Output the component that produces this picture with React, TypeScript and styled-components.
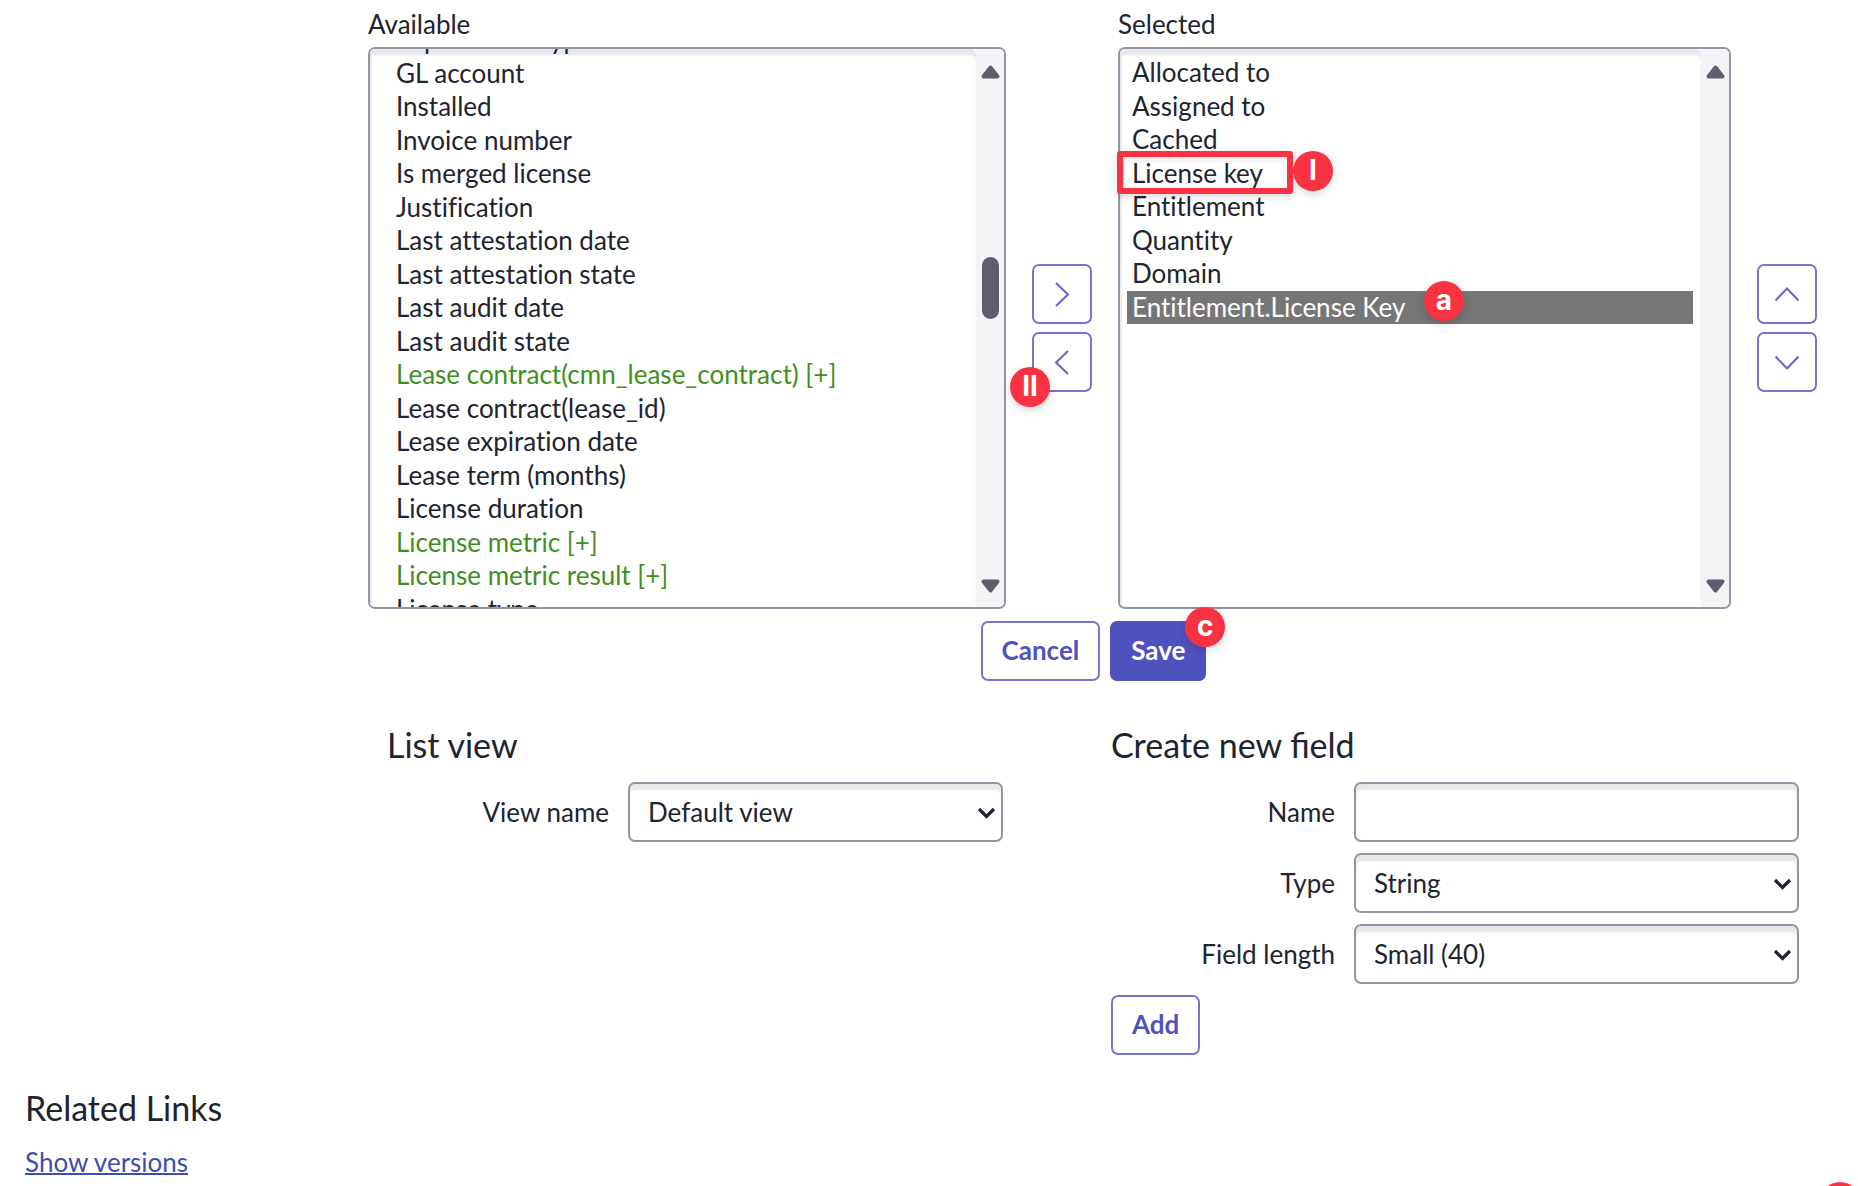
import React, { useLayoutEffect, useRef } from "react";
import styled, { createGlobalStyle } from "styled-components";

const ink = "#20242f";
const indigo = "#4f52bd";
const edge = "#9196a5";
const red = "#fa3344";

const GlobalStyle = createGlobalStyle`
  *, *::before, *::after { box-sizing: border-box; }
  body {
    margin: 0;
    background: #fff;
    color: ${ink};
    font-family: Lato, "Open Sans", sans-serif;
    font-size: 26px;
    line-height: 32px;
  }
`;

const Page = styled.main`
  position: relative;
  min-height: 100vh;
  overflow: hidden;
  padding-top: 8px;
`;

const Columns = styled.div`
  display: grid;
  grid-template-columns: 368fr 638fr 112px 613fr 127px;
`;

const Bucket = styled.div<{ $column: number }>`
  grid-column: ${(p) => p.$column};
  display: flex;
  flex-direction: column;
  gap: 7px;
  min-width: 0;
`;

const Frame = styled.div`
  position: relative;
  display: flex;
  height: 562px;
  border: 2px solid ${edge};
  border-radius: 7px;
`;

const ListBox = styled.select<{ $indent: number }>`
  flex: 1;
  min-width: 0;
  height: 100%;
  margin: 0;
  padding: 7px 8px 0 7px;
  border: 0;
  border-radius: 5px;
  outline: 0;
  background: #fff;
  color: ${ink};
  font: inherit;
  font-variant-ligatures: none;
  box-shadow: inset 0 6px 2px #e6e7e7, inset 2px 0 2px #ececee;
  scrollbar-width: none;

  &::-webkit-scrollbar { display: none; }

  option {
    box-sizing: content-box;
    min-height: 1.25em;
    padding: 0 4px 1px ${(p) => p.$indent}px;
  }
  option:checked {
    background: #767676 linear-gradient(#767676, #767676);
    color: #fff;
  }
`;

const Choice = styled.option<{ $related?: boolean }>`
  color: ${(p) => (p.$related ? "#3f8f22" : ink)};
`;

const Track = styled.div`
  display: flex;
  flex-direction: column;
  align-items: center;
  width: 28px;
  padding: 15px 0 13px;
  border-radius: 0 5px 5px 0;
  background: #f4f4f7;
  color: #5f5d6e;
`;

const Rail = styled.div`
  flex: 1;
  padding-top: 178px;
`;

const Thumb = styled.div`
  width: 17px;
  height: 62px;
  border-radius: 9px;
  background: currentColor;
`;

const Movers = styled.div<{ $column: number }>`
  grid-column: ${(p) => p.$column};
  display: flex;
  flex-direction: column;
  align-items: flex-start;
  gap: 8px;
  padding: 256px 0 0 26px;
`;

const Anchor = styled.div`
  position: relative;
  display: flex;
`;

const Button = styled.button<{ $primary?: boolean }>`
  display: flex;
  align-items: center;
  justify-content: center;
  height: 60px;
  padding: 0 19px 2px;
  border: 2px solid ${(p) => (p.$primary ? indigo : "#7477cd")};
  border-radius: 7px;
  background: ${(p) => (p.$primary ? indigo : "#fff")};
  color: ${(p) => (p.$primary ? "#fff" : indigo)};
  font: inherit;
  font-weight: 700;
`;

const IconButton = styled(Button)`
  width: 60px;
  padding: 0;
`;

const Actions = styled.div`
  display: flex;
  justify-content: center;
  gap: 10px;
  margin: 12px 39px 0 0;
  padding-left: 368px;
`;

const Forms = styled.div`
  display: grid;
  grid-template-columns: 387fr 616fr 108px 688fr 59px;
  margin-top: 43px;
`;

const Section = styled.form<{ $column: number }>`
  grid-column: ${(p) => p.$column};
  display: flex;
  flex-direction: column;
  align-items: flex-start;
  gap: 11px;
`;

const Heading = styled.h2`
  margin: 0;
  font-size: 34px;
  font-weight: 400;
  line-height: 42px;
`;

const SectionHeading = styled(Heading)`
  margin-bottom: 5px;
`;

const Field = styled.div<{ $label: number }>`
  display: grid;
  grid-template-columns: ${(p) => p.$label}px minmax(0, 1fr);
  column-gap: 19px;
  align-items: center;
  width: 100%;
`;

const FieldLabel = styled.label`
  text-align: right;
`;

const Control = styled.div`
  position: relative;
`;

const TextBox = styled.input`
  display: block;
  width: 100%;
  height: 60px;
  padding: 0 18px;
  border: 2px solid ${edge};
  border-radius: 7px;
  background: #fff;
  box-shadow: inset 0 6px 2px #e6e7e7;
  color: ${ink};
  font: inherit;
`;

const DropDown = styled(TextBox).attrs({ as: "select" })`
  appearance: none;
`;

const Caret = styled.svg`
  position: absolute;
  top: 24px;
  right: 7px;
  pointer-events: none;
`;

const Related = styled.section`
  display: flex;
  flex-direction: column;
  align-items: flex-start;
  gap: 17px;
  margin-top: 32px;
  padding: 0 25px;
`;

const Link = styled.a`
  color: #3c4fae;
  text-decoration: underline;
  text-decoration-thickness: 2px;
`;

const Marker = styled.span<{ $x: number; $y: number }>`
  position: absolute;
  left: ${(p) => p.$x}px;
  top: ${(p) => p.$y}px;
  display: flex;
  align-items: center;
  justify-content: center;
  width: 40px;
  height: 40px;
  padding-bottom: 2px;
  border-radius: 50%;
  background: ${red};
  box-shadow: 0 3px 8px rgba(0, 0, 0, 0.16);
  color: #fff;
  font: 700 28px/38px Inter, "Liberation Sans", sans-serif;
  pointer-events: none;
`;

const CornerMarker = styled(Marker)`
  top: auto;
  left: auto;
  right: -2px;
  bottom: -36px;
`;

const Highlight = styled.span`
  position: absolute;
  left: -3px;
  top: 102px;
  width: 176px;
  height: 43px;
  border: 6px solid ${red};
  border-radius: 3px;
  box-shadow: 0 3px 6px rgba(0, 0, 0, 0.14), inset 0 3px 6px rgba(0, 0, 0, 0.1);
  pointer-events: none;
`;

const available = [
  "Expenditure type",
  "GL account",
  "Installed",
  "Invoice number",
  "Is merged license",
  "Justification",
  "Last attestation date",
  "Last attestation state",
  "Last audit date",
  "Last audit state",
  "Lease contract(cmn_lease_contract) [+]",
  "Lease contract(lease_id)",
  "Lease expiration date",
  "Lease term (months)",
  "License duration",
  "License metric [+]",
  "License metric result [+]",
  "License type",
];

const selected = [
  "Allocated to",
  "Assigned to",
  "Cached",
  "License key",
  "Entitlement",
  "Quantity",
  "Domain",
  "Entitlement.License Key",
];

const chevrons = {
  right: "M9 1 L21 12.5 L9 24",
  left: "M21 1 L9 12.5 L21 24",
  up: "M3.500 18.500 L15 6.500 L26.500 18.500",
  down: "M3.500 6.500 L15 18.500 L26.500 6.500",
};

function Chevron({ to }: { to: keyof typeof chevrons }) {
  return (
    <svg width="30" height="25" viewBox="0 0 30 25" fill="none" aria-hidden="true">
      <path d={chevrons[to]} stroke="#6265cb" strokeWidth="2" />
    </svg>
  );
}

function ScrollTrack({ thumb }: { thumb?: boolean }) {
  return (
    <Track aria-hidden="true">
      <svg width="19" height="15" viewBox="0 0 19 15">
        <path d="M9.500 3.500 L16.500 12.500 H2.500 Z" fill="currentColor" stroke="currentColor" strokeWidth="4" strokeLinejoin="round" />
      </svg>
      <Rail>{thumb && <Thumb />}</Rail>
      <svg width="19" height="15" viewBox="0 0 19 15">
        <path d="M2.500 2.500 H16.500 L9.500 11.500 Z" fill="currentColor" stroke="currentColor" strokeWidth="4" strokeLinejoin="round" />
      </svg>
    </Track>
  );
}

function DropDownField({ id, label, value, labelWidth }: { id: string; label: string; value: string; labelWidth: number }) {
  return (
    <Field $label={labelWidth}>
      <FieldLabel htmlFor={id}>{label}</FieldLabel>
      <Control>
        <DropDown id={id}>
          <option>{value}</option>
        </DropDown>
        <Caret width="19" height="14" viewBox="0 0 19 14" fill="none" aria-hidden="true">
          <path d="M2 3 L9.500 10.500 L17 3" stroke={ink} strokeWidth="3.200" />
        </Caret>
      </Control>
    </Field>
  );
}

export default function App() {
  const availableRef = useRef<HTMLSelectElement>(null);

  useLayoutEffect(() => {
    if (availableRef.current) availableRef.current.scrollTop = 33;
  }, []);

  return (
    <Page>
      <GlobalStyle />
      <Columns>
        <Bucket $column={2}>
          <label htmlFor="available">Available</label>
          <Frame>
            <ListBox id="available" ref={availableRef} multiple $indent={19}>
              {available.map((name) => (
                <Choice key={name} $related={name.endsWith("[+]")}>{name}</Choice>
              ))}
            </ListBox>
            <ScrollTrack thumb />
          </Frame>
        </Bucket>
        <Movers $column={3}>
          <IconButton type="button" aria-label="Add to selected"><Chevron to="right" /></IconButton>
          <Anchor>
            <IconButton type="button" aria-label="Remove from selected"><Chevron to="left" /></IconButton>
            <Marker $x={-22} $y={35}>II</Marker>
          </Anchor>
        </Movers>
        <Bucket $column={4}>
          <label htmlFor="selected">Selected</label>
          <Frame>
            <ListBox id="selected" multiple defaultValue={["Entitlement.License Key"]} $indent={5}>
              {selected.map((name) => (
                <Choice key={name}>{name}</Choice>
              ))}
            </ListBox>
            <ScrollTrack />
            <Highlight />
            <Marker $x={173} $y={102}>I</Marker>
            <Marker $x={304} $y={232}>a</Marker>
          </Frame>
        </Bucket>
        <Movers $column={5}>
          <IconButton type="button" aria-label="Move up"><Chevron to="up" /></IconButton>
          <IconButton type="button" aria-label="Move down"><Chevron to="down" /></IconButton>
        </Movers>
      </Columns>

      <Actions>
        <Button type="button">Cancel</Button>
        <Anchor>
          <Button type="button" $primary>Save</Button>
          <Marker $x={75} $y={-14}>c</Marker>
        </Anchor>
      </Actions>

      <Forms>
        <Section $column={2}>
          <SectionHeading>List view</SectionHeading>
          <DropDownField id="view" label="View name" value="Default view" labelWidth={222} />
        </Section>
        <Section $column={4}>
          <SectionHeading>Create new field</SectionHeading>
          <Field $label={224}>
            <FieldLabel htmlFor="name">Name</FieldLabel>
            <TextBox id="name" type="text" />
          </Field>
          <DropDownField id="type" label="Type" value="String" labelWidth={224} />
          <DropDownField id="length" label="Field length" value="Small (40)" labelWidth={224} />
          <Button type="button">Add</Button>
        </Section>
      </Forms>

      <Related>
        <Heading>Related Links</Heading>
        <Link href="#versions">Show versions</Link>
      </Related>
      <CornerMarker $x={0} $y={0} />
    </Page>
  );
}
